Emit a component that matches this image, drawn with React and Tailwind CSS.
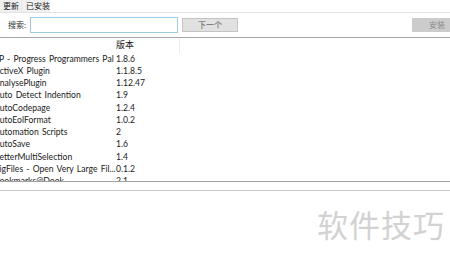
import React from 'react';

const plugins = [
  { name: '3P - Progress Programmers Pal', version: '1.8.6' },
  { name: 'ActiveX Plugin', version: '1.1.8.5' },
  { name: 'AnalysePlugin', version: '1.12.47' },
  { name: 'Auto Detect Indention', version: '1.9' },
  { name: 'AutoCodepage', version: '1.2.4' },
  { name: 'AutoEolFormat', version: '1.0.2' },
  { name: 'Automation Scripts', version: '2' },
  { name: 'AutoSave', version: '1.6' },
  { name: 'BetterMultiSelection', version: '1.4' },
  { name: 'BigFiles - Open Very Large Fil...', version: '0.1.2' },
  { name: 'Bookmarks@Dook', version: '2.1' },
];

const App = () => {
  return (
    <div
      className="w-[450px] h-[259px] bg-white overflow-hidden flex flex-col text-[#1a1a1a]"
      style={{ fontFamily: 'Lato, "Noto Sans CJK SC", sans-serif' }}
    >
      {/* tabs */}
      <div className="h-[13px] flex border-b border-[#e3e3e3] text-[8px] leading-[12px] whitespace-nowrap">
        <div className="w-[22px] bg-[#f0f0f0] pl-[3px] border-r border-[#e6e6e6]">更新</div>
        <div className="w-[28px] bg-[#f0f0f0] pl-[4px]">已安装</div>
      </div>

      {/* search row */}
      <div className="h-[25px] flex items-center border-b border-[#a8a8a8] text-[8px] whitespace-nowrap">
        <span className="ml-[8px] w-[22px] text-[#333]">搜索:</span>
        <div className="w-[148px] h-[16px] border border-[#9ccbe3] bg-white" />
        <button className="ml-[4px] w-[56px] h-[14px] bg-[#e1e1e1] border border-[#c4c4c4] text-[8px] leading-[12px] text-[#555]">
          下一个
        </button>
        <div className="flex-1" />
        <button className="w-[38px] h-[14px] bg-[#cccccc] text-[8px] leading-[14px] text-[#8a8a8a] text-right pr-[5px]">
          安装
        </button>
      </div>

      {/* list */}
      <div className="h-[144px] overflow-hidden border-b border-[#a0a0a0] text-[8.6px] [word-spacing:1px]">
        <div className="flex h-[14.5px] items-end">
          <div className="w-[116px]" />
          <div className="w-[64px] h-full border-r border-[#ececec] leading-[13px] text-[9px]">版本</div>
        </div>
        {plugins.map((p) => (
          <div key={p.version} className="flex h-[12.25px] leading-[12.25px] whitespace-nowrap">
            <div className="w-[116px] overflow-hidden">
              <div className="-ml-[6px]">{p.name}</div>
            </div>
            <div>{p.version}</div>
          </div>
        ))}
      </div>

      <div className="h-[9px] border-b border-[#c8c8c8]" />

      {/* watermark */}
      <div className="flex-1 flex justify-end pr-[5px] pt-[15px]">
        <span className="text-[31px] leading-[36px] text-[#d2d2d2] tracking-[1px]" style={{ fontFamily: '"Noto Sans CJK SC", sans-serif' }}>
          软件技巧
        </span>
      </div>
    </div>
  );
};

export default App;
